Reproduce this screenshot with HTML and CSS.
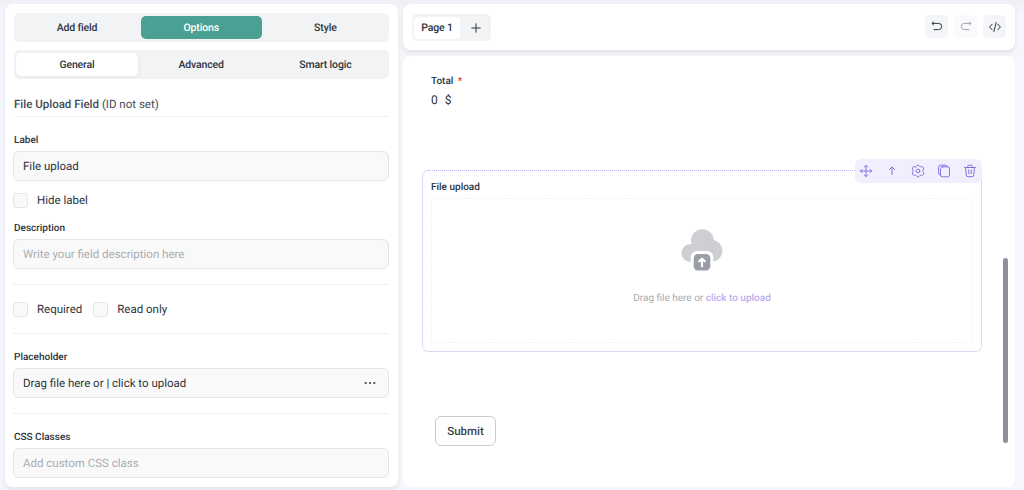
FILE: index.html
```html
<!DOCTYPE html>
<html lang="en">
  <head>
    <meta charset="UTF-8" />
    <meta name="viewport" content="width=device-width, initial-scale=1.0" />
    <title>Form builder</title>
    <link rel="stylesheet" href="styles.css">
  </head>

  <body>
    <div class="builder">
      <aside class="sidebar">
        <nav class="tabs main-tabs">
          <a class="tab">Add field</a>
          <a class="tab tab-green">Options</a>
          <a class="tab">Style</a>
        </nav>
        <nav class="tabs">
          <a class="tab tab-white">General</a>
          <a class="tab">Advanced</a>
          <a class="tab">Smart logic</a>
        </nav>
        <h2 class="title"><b>File Upload Field</b> (ID not set)</h2>

        <label class="label first" for="label">Label</label>
        <input type="text" class="textinput" id="label" value="File upload" />
        <div class="checks hide-label">
          <label class="check"><input type="checkbox" class="box" />Hide label</label>
        </div>
        <label class="label" for="description">Description</label>
        <input type="text" class="textinput" id="description" placeholder="Write your field description here" />

        <div class="checks section">
          <label class="check"><input type="checkbox" class="box" />Required</label>
          <label class="check"><input type="checkbox" class="box" />Read only</label>
        </div>

        <div class="section">
          <label class="label" for="placeholder">Placeholder</label>
          <div class="textinput with-menu">
            <input type="text" class="bare" id="placeholder" value="Drag file here or | click to upload" />
            <svg class="dots" viewBox="0 0 12 4"><circle cx="1.7" cy="2" r="1.1" /><circle cx="6" cy="2" r="1.1" /><circle cx="10.3" cy="2" r="1.1" /></svg>
          </div>
        </div>

        <div class="section">
          <label class="label" for="css">CSS Classes</label>
          <input type="text" class="textinput" id="css" placeholder="Add custom CSS class" />
        </div>
      </aside>

      <main class="main">
        <header class="topbar">
          <div class="pages">
            <span class="page">Page 1</span>
            <svg class="plus" viewBox="0 0 10 10"><path d="M5 .8v8.4M.8 5h8.4" /></svg>
          </div>
          <div class="actions">
            <button class="action">
              <svg viewBox="0 0 12 12"><path d="M2.6 .9 1 2.4 2.6 3.9M1.2 2.4h6.4a3.1 3.1 0 0 1 0 6.2H3" /></svg>
            </button>
            <button class="action disabled">
              <svg viewBox="0 0 12 12"><path d="m9.4 .9 1.6 1.5-1.6 1.5M10.8 2.4H4.4a3.1 3.1 0 0 0 0 6.2H9" /></svg>
            </button>
            <button class="action">
              <svg viewBox="0 0 12 12"><path d="M3.2 3.2.6 6l2.6 2.8M8.8 3.2 11.4 6 8.8 8.8M7.1 1.5 4.9 10.5" /></svg>
            </button>
          </div>
        </header>

        <section class="canvas">
          <div class="total-label">Total <span class="star">*</span></div>
          <div class="total">0 <span>$</span></div>

          <div class="field">
            <div class="tools">
              <svg viewBox="0 0 14 14"><path d="M7 1.5v11M1.5 7h11M5.4 3 7 1.4 8.6 3M5.4 11 7 12.6 8.6 11M3 5.4 1.4 7 3 8.6M11 5.4 12.6 7 11 8.6" /></svg>
              <svg viewBox="0 0 14 14"><path d="M7 10.6V3M4.5 5.5 7 3l2.5 2.5" /></svg>
              <svg viewBox="0 0 14 14"><path d="M4.5 2.8Q5.2 2.7 5.9 1.6Q7 .1 8.1 1.6Q8.8 2.7 9.5 2.8Q10.4 2.5 11.4 2.8Q13.1 3.4 12.5 5.2Q11.8 6.3 11.9 7Q11.8 7.7 12.5 8.8Q13.1 10.6 11.4 11.2Q10.4 11.5 9.5 11.2Q8.8 11.3 8.1 12.4Q7 13.9 5.9 12.4Q5.2 11.3 4.5 11.2Q3.6 11.5 2.6 11.2Q.9 10.6 1.5 8.8Q2.2 7.7 2.1 7Q2.2 6.3 1.5 5.2Q.9 3.4 2.6 2.8Q3.6 2.5 4.5 2.8Z" /><circle cx="7" cy="7" r="1.8" /></svg>
              <svg viewBox="0 0 14 14"><rect x="3.5" y="2.8" width="9" height="10" rx="1.8" /><path d="M3.4 11.2Q1.5 10.6 1.5 8.9V3.5Q1.5 1.2 3.8 1.2h4.5q1.8 0 2.3 1.5" /></svg>
              <svg viewBox="0 0 14 14"><path d="M1.5 3.5h11M4.5 3.4 5 1.6Q5.1 1.2 5.6 1.2h2.8q.5 0 .6.4l.5 1.8M2.6 3.6l.6 7.4q.1 1.7 1.8 1.7h4q1.7 0 1.8-1.7l.6-7.4M5.7 6l.2 3.7M8.3 6 8.1 9.7" /></svg>
            </div>
            <div class="field-label">File upload</div>
            <div class="dropzone">
              <svg class="cloud" viewBox="0 0 42 43">
                <g class="cloud-shape">
                  <circle cx="21.4" cy="11.6" r="11.4" />
                  <circle cx="9.4" cy="24" r="9" />
                  <circle cx="30.6" cy="21.8" r="10.8" />
                  <rect x="11" y="14" width="20" height="12" />
                </g>
                <rect class="cloud-gap" x="9.8" y="22" width="22.5" height="23" rx="6" />
                <rect class="cloud-box" x="12.7" y="25" width="16.6" height="16.4" rx="4.2" />
                <path class="cloud-arrow" d="M21 37.2v-7M18.2 32.2l2.8-2.5 2.8 2.5" />
              </svg>
              <div class="drop-text">Drag file here or <b>click to upload</b></div>
            </div>
          </div>

          <button class="submit">Submit</button>
          <div class="scrollbar"></div>
        </section>
      </main>
    </div>
  </body>
</html>
```

FILE: styles.css
```css
* {
  box-sizing: border-box;
}

body {
  margin: 0;
  background: #f6f7fc;
  font-family: Roboto, sans-serif;
  color: #2d333d;
  text-rendering: geometricPrecision;
}

input,
button {
  font-family: inherit;
  color: inherit;
  text-rendering: inherit;
}

svg {
  fill: none;
  stroke: currentColor;
  stroke-linecap: round;
  stroke-linejoin: round;
}

.builder {
  display: flex;
  gap: 5px;
  height: 490px;
  padding: 4px 9px 3px 5px;
  background: linear-gradient(#eff0f5, #f6f7fc 16px);
}

.sidebar,
.topbar,
.canvas {
  background: white;
  border-radius: 8px;
}

.sidebar {
  width: 393px;
  padding: 9px 9px 0 8px;
  box-shadow: 0 3px 5px rgba(40, 45, 70, 0.09);
}

.tabs {
  display: grid;
  grid-template-columns: repeat(3, 1fr);
  gap: 3px;
  height: 29px;
  margin-left: 1px;
  padding: 3px 3px 3px 2.4px;
  border-radius: 5px;
  background: #f2f3f5;
}

.main-tabs {
  margin-bottom: 8px;
}

.tab {
  display: flex;
  align-items: center;
  justify-content: center;
  border-radius: 5px;
  font-size: 10.5px;
  font-weight: 500;
  letter-spacing: -0.15px;
}

.tab-green {
  background: #4aa092;
  color: white;
}

.tab-white {
  background: white;
  box-shadow: 1px 1px 4px rgba(40, 45, 70, 0.05);
}

.title {
  height: 23px;
  margin: 15px 0 0 1px;
  border-bottom: 1px solid #eff0f1;
  font-size: 11.5px;
  font-weight: 400;
  line-height: 21px;
  color: #444a54;
}

.title b {
  font-weight: 500;
}

.label {
  display: block;
  height: 17px;
  margin-left: 1px;
  font-size: 10px;
  font-weight: 500;
  line-height: 13px;
}

.first {
  margin-top: 17px;
}

.textinput {
  display: block;
  width: 100%;
  height: 30px;
  padding: 0 9px;
  border: 1px solid #e4e5e7;
  border-radius: 6px;
  background: #f9f9f9;
  font-size: 11.5px;
}

.textinput::placeholder {
  color: #a9acb2;
}

.with-menu {
  display: flex;
  align-items: center;
}

.bare {
  flex: 1;
  padding: 0;
  border: 0;
  background: none;
  font-size: 11.5px;
}

.dots {
  width: 12px;
  height: 4px;
  margin-right: 3px;
  fill: #3c424d;
  stroke: none;
}

.checks {
  display: flex;
  gap: 11px;
}

.hide-label {
  padding: 12px 0 14px;
}

.check {
  display: flex;
  align-items: flex-start;
  height: 15px;
  font-size: 11.5px;
  line-height: 14px;
}

.box {
  appearance: none;
  width: 15px;
  height: 15px;
  margin: 0 9px 0 0;
  border: 1px solid #e4e5e7;
  border-radius: 3px;
  background: #f9f9f9;
}

.section {
  margin-top: 15px;
  padding-top: 17px;
  border-top: 1px solid #eff0f1;
}

.checks.section {
  margin-bottom: 16px;
}

.main {
  flex: 1;
  display: flex;
  flex-direction: column;
  gap: 6px;
}

.topbar {
  display: flex;
  justify-content: space-between;
  height: 46px;
  padding: 10px 9px;
  box-shadow: 0 3px 5px rgba(40, 45, 70, 0.1);
}

.pages {
  display: flex;
  align-items: center;
  width: 79px;
  height: 27px;
  padding: 2px;
  border-radius: 5px;
  background: #f2f3f5;
}

.page {
  width: 46px;
  border-radius: 4px;
  background: white;
  font-size: 10.5px;
  font-weight: 500;
  letter-spacing: -0.15px;
  line-height: 22px;
  text-align: center;
}

.plus {
  width: 10px;
  height: 10px;
  margin-left: 11px;
}

.actions {
  display: flex;
  gap: 6px;
}

.action {
  display: flex;
  align-items: center;
  justify-content: center;
  width: 23px;
  height: 23px;
  margin-top: 1px;
  padding: 0;
  border: 0;
  border-radius: 5px;
  background: #f4f5f9;
}

.action svg {
  width: 12px;
  height: 12px;
}

.disabled {
  opacity: 0.45;
}

.canvas {
  position: relative;
  flex: 1;
  padding: 18px 33px 0 19px;
}

.total-label {
  margin-left: 9px;
  font-size: 10px;
  font-weight: 500;
  line-height: 15px;
}

.star {
  margin-left: 2px;
  color: #e03b32;
}

.total {
  margin-left: 9px;
  font-size: 12px;
  line-height: 23px;
}

.total span {
  margin-left: 4px;
}

.field {
  position: relative;
  height: 182px;
  margin-top: 58px;
  padding: 10px 8px 0;
  border: 1px dotted #bbb2ee;
  border-radius: 6px;
}

.tools {
  position: absolute;
  top: -12px;
  right: -1px;
  display: flex;
  align-items: center;
  justify-content: space-between;
  width: 127px;
  height: 24px;
  padding: 0 5px 0 4px;
  border-radius: 6px;
  background: #f1effd;
  color: #8375de;
}

.tools svg {
  width: 14px;
  height: 14px;
}

.field-label {
  height: 17px;
  font-size: 10px;
  font-weight: 500;
  line-height: 13px;
}

.dropzone {
  display: flex;
  flex-direction: column;
  align-items: center;
  height: 145px;
  padding-top: 30px;
  border: 1px dashed #f3f3f5;
  border-radius: 3px;
}

.cloud {
  width: 42px;
  height: 43px;
  stroke: none;
}

.cloud-shape {
  fill: #cdcfd3;
}

.cloud-gap {
  fill: white;
}

.cloud-box {
  fill: #9a9fa7;
}

.cloud-arrow {
  stroke: white;
  stroke-width: 2.2;
}

.drop-text {
  margin-top: 19px;
  font-size: 10px;
  line-height: 15px;
  color: #a7a9ae;
}

.drop-text b {
  font-weight: 500;
  color: #b8acef;
}

.submit {
  display: block;
  width: 61px;
  height: 30px;
  margin: 64px 0 0 13px;
  padding: 0;
  border: 1px solid #caccd0;
  border-radius: 6px;
  background: white;
  font-size: 11.5px;
  font-weight: 500;
  color: #3b4350;
}

.scrollbar {
  position: absolute;
  top: 202px;
  right: 7px;
  width: 5px;
  height: 185px;
  border-radius: 3px;
  background: #8c909b;
}
```
